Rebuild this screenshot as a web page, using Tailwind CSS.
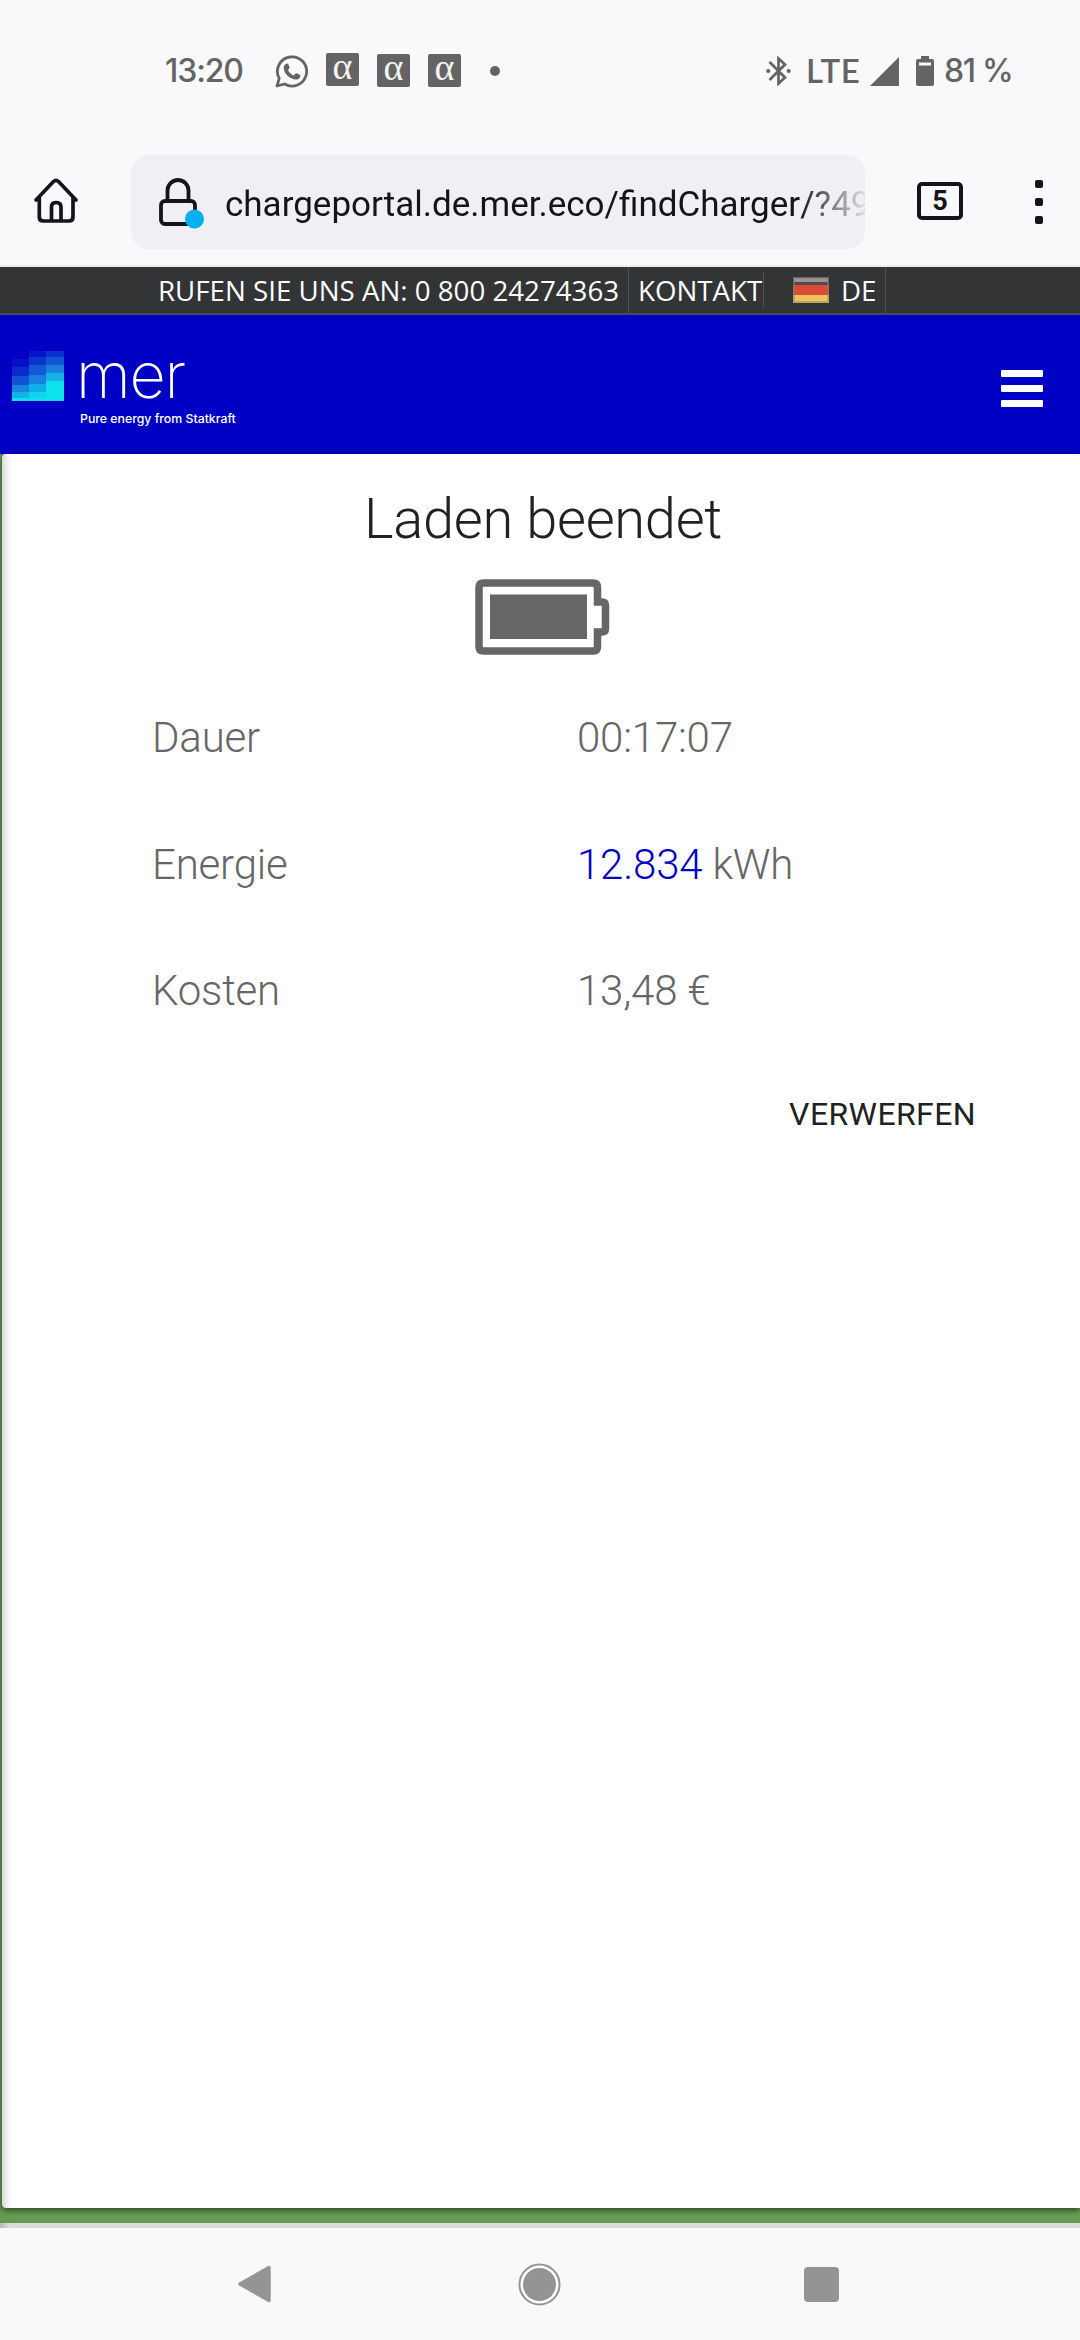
<!DOCTYPE html>
<html lang="de">
<head>
<meta charset="utf-8">
<title>Laden beendet</title>
<script src="https://cdn.jsdelivr.net/npm/@tailwindcss/browser@4"></script>
</head>
<body class="flex h-[2340px] w-[1080px] flex-col overflow-hidden bg-[#f9f9fb] font-[Roboto,sans-serif]">

<!-- Status bar -->
<header class="flex h-[142px] shrink-0 items-center pl-[165px] text-[#646464]">
  <span class="w-[110px] font-[Inter,sans-serif] text-[32px] leading-none font-medium tracking-[-1.100px]">13:20</span>
  <svg class="h-[33px] w-[33px]" viewBox="0 0 33 33"><path d="M2 31 4.2 23.4A14.6 14.6 0 1 1 9.6 29Z" fill="none" stroke="#646464" stroke-width="2.8" stroke-linejoin="round"/><path d="M11.2 8.8c.8-.4 1.800-.2 2.100.5l1.200 2.800c.2.600 0 1.100-.4 1.600l-1.200 1.400c1.300 2.500 3.200 4.200 5.900 5.400l1.500-1.800c.4-.5.9-.6 1.500-.4l2.900 1.400c.6.300.8.700.6 1.500-.5 2.200-2.400 3.500-4.600 3.400C14.600 24.200 9 18.300 8.700 13c-.1-1.700.9-3.400 2.500-4.200Z" fill="#646464"/></svg>
  <div class="ml-[18px] flex gap-[18px] font-[Liberation_Serif,serif] text-[38px] text-[#f4f4f4]">
    <span class="mb-px flex h-[33px] w-[33px] -translate-y-px items-center justify-center rounded-xs bg-[#646464] pb-[7px] leading-none">α</span>
    <span class="flex h-[33px] w-[33px] items-center justify-center rounded-xs bg-[#646464] pb-[7px] leading-none">α</span>
    <span class="flex h-[33px] w-[33px] items-center justify-center rounded-xs bg-[#646464] pb-[7px] leading-none">α</span>
  </div>
  <span class="ml-[29px] h-[10px] w-[10px] rounded-full bg-[#646464]"></span>
  <svg class="ml-[266px] h-[30px] w-[25px]" viewBox="0 0 25 30"><path d="M3.500 6 19 21.500 12.500 27.500V2.500L19 8.500 3.500 24" fill="none" stroke="#646464" stroke-width="2.700"/><circle cx="2.200" cy="15" r="2.100" fill="#646464"/><circle cx="22.700" cy="15" r="2.100" fill="#646464"/></svg>
  <span class="-mt-[2px] ml-[15px] w-[64px] font-[Lato,sans-serif] text-[33px] leading-none font-semibold tracking-[.5px]">LTE</span>
  <svg class="h-[29px] w-[29px]" viewBox="0 0 29 29"><path d="M0 29 29 0V29Z" fill="#646464"/></svg>
  <svg class="ml-[17px] h-[30px] w-[18px]" viewBox="0 0 18 30"><path d="M5 3V0h8v3h3q2 0 2 2v23q0 2-2 2H2q-2 0-2-2V5q0-2 2-2Z" fill="#646464"/><path d="M3 6.500h12v3H3z" fill="#f9f9fb"/></svg>
  <span class="ml-[10px] font-[Inter,sans-serif] text-[32px] leading-none font-medium tracking-[-1.300px] whitespace-nowrap">81 %</span>
</header>

<!-- Browser toolbar -->
<nav class="flex h-[125px] shrink-0 items-start border-b-2 border-[#ebecef] pt-[13px]">
  <svg class="mt-[21px] ml-[33px] h-[48px] w-[46px]" viewBox="0 0 46 48" fill="none" stroke="#15141a" stroke-width="3.700" stroke-linecap="round" stroke-linejoin="round"><path d="M3 24 20.500 5.500Q23 3.200 25.500 5.500L43 24M6.300 22V41q0 4 4 4H36q4 0 4-4V22M18.500 44V31q0-4.500 4.700-4.500T28 31V44"/></svg>
  <div class="ml-[52px] flex h-[94px] w-[734px] items-center overflow-hidden rounded-[18px] bg-[#f0f0f4]">
    <svg class="ml-[27px] h-[54px] w-[48px] shrink-0" viewBox="0 0 48 54" fill="none" stroke="#15141a" stroke-width="3.800"><rect x="3" y="26" width="34" height="23" rx="4"/><path d="M9.500 26V15.500a10.500 10.500 0 0 1 21 0V26"/><circle cx="36.500" cy="44" r="9.500" fill="#00b0f0" stroke="none"/></svg>
    <span class="mt-[5px] -mr-[60px] ml-[19px] bg-linear-to-r from-[#15141a] from-89% to-transparent to-100% bg-clip-text text-[35px] leading-[48px] whitespace-nowrap text-transparent">chargeportal.de.mer.eco/findCharger/?49</span>
  </div>
  <span class="mt-[27px] ml-[52px] flex h-[38px] w-[46px] items-center justify-center rounded-[5px] border-4 border-[#15141a] text-[27px] leading-none font-bold text-[#15141a]">5</span>
  <span class="mt-[25px] ml-[72px] flex flex-col gap-[10px]"><i class="size-[8px] rounded-[2px] bg-[#15141a]"></i><i class="size-[8px] rounded-[2px] bg-[#15141a]"></i><i class="size-[8px] rounded-[2px] bg-[#15141a]"></i></span>
</nav>

<!-- Contact bar -->
<section class="flex h-[48px] shrink-0 items-center border-b-2 border-[#4a4a48] bg-[#333436] font-[Open_Sans,sans-serif] text-[27.700px] leading-none text-white">
  <span class="flex h-full w-[629px] items-center border-r border-[#505050] pt-[2px] pl-[158px] whitespace-nowrap">RUFEN SIE UNS AN: 0 800 24274363</span>
  <span class="flex h-[36px] w-[135px] items-center border-r border-[#505050] pt-[2px] pl-[9px] whitespace-nowrap">KONTAKT</span>
  <span class="flex h-full w-[122px] items-center border-r border-[#505050] pl-[29px]">
    <svg class="h-[26px] w-[36px]" viewBox="0 0 36 26"><path d="M0 0h36v9H0z" fill="#514a4a"/><path d="M1 1h34v4H1z" fill="#989494"/><path d="M0 8h36v10H0z" fill="#dc4b38"/><path d="M0 18h36v8H0z" fill="#eec55b"/><path d="M1 1h34v24H1z" fill="none" stroke="#8a7f6a" stroke-opacity=".5" stroke-width="2"/></svg>
    <span class="ml-[12px] pt-[2px]">DE</span>
  </span>
</section>

<!-- Brand header -->
<section class="flex h-[139px] shrink-0 items-start bg-[#0000c4]">
  <svg class="mt-[35px] ml-[12px] h-[51px] w-[52px]" viewBox="0 0 52 51" shape-rendering="crispEdges">
    <path d="M0 9h17v8H0z" fill="#0412c6"/><path d="M0 17h17v9H0z" fill="#0a2cca"/><path d="M0 26h17v9H0z" fill="#1054d2"/><path d="M0 35h17v7H0z" fill="#1784de"/><path d="M0 42h17v6H0z" fill="#12b4e6"/><path d="M0 48h52v3H0z" fill="#10e2ec"/>
    <path d="M17 1h17v6H17z" fill="#0615c7"/><path d="M17 7h17v8H17z" fill="#0b35cd"/><path d="M17 15h17v10H17z" fill="#1458d4"/><path d="M17 25h17v9H17z" fill="#1a80de"/><path d="M17 34h17v8H17z" fill="#12aee8"/><path d="M17 42h17v6H17z" fill="#10d4ec"/>
    <path d="M34 1h18v6H34z" fill="#0b30cc"/><path d="M34 7h18v8H34z" fill="#1455d4"/><path d="M34 15h18v8H34z" fill="#1c80de"/><path d="M34 23h18v8H34z" fill="#14b4e8"/><path d="M34 31h18v17H34z" fill="#10e2ec"/>
  </svg>
  <div class="mt-[22px] ml-[16px] flex flex-col font-[Inter,sans-serif] text-white">
    <span class="-ml-[4px] h-[74px] text-[63px] leading-[76px] font-[250] tracking-[-1.300px]">mer</span>
    <span class="-mt-px text-[12.300px] leading-[18px] font-medium whitespace-nowrap">Pure energy from Statkraft</span>
  </div>
  <span class="mt-[55px] mr-[37px] ml-auto flex flex-col gap-[8px]"><i class="h-[7px] w-[42px] rounded-[1px] bg-white"></i><i class="h-[7px] w-[42px] rounded-[1px] bg-white"></i><i class="h-[7px] w-[42px] rounded-[1px] bg-white"></i></span>
</section>

<!-- Charging summary -->
<section class="flex h-[1769px] shrink-0 flex-col bg-[#669c52] pl-[2px]">
  <main class="flex h-[1754px] flex-col rounded-l-[4px] bg-white bg-linear-to-r from-[#dadada] to-white to-[9px] shadow-[0_2px_6px_rgba(0,0,0,.6)]">
    <h1 class="mt-[32px] pl-[4px] text-center text-[56px] leading-[66px] font-light tracking-[-.300px] text-[#212121]">Laden beendet</h1>
    <svg class="mt-[27px] ml-[473px] h-[76px] w-[135px]" viewBox="0 0 135 76"><path d="M8.500 4H118q4.500 0 4.500 4.500V23H127q3.500 0 3.500 3.500v23q0 3.500-3.500 3.500h-4.500v14.500q0 4.500-4.500 4.500H8.500Q4 72 4 67.500V8.500Q4 4 8.500 4Z" fill="none" stroke="#666" stroke-width="7.500"/><path d="M15 15.500h97V60H15z" fill="#666"/></svg>
    <dl class="mt-[20px] grid auto-rows-[126.500px] grid-cols-[425px_1fr] items-center pl-[150px] text-[42px] leading-none font-light tracking-[-.200px] text-[#666]">
      <dt>Dauer</dt><dd>00:17:07</dd>
      <dt>Energie</dt><dd><span class="text-[#0000c4]">12.834</span> kWh</dd>
      <dt>Kosten</dt><dd>13,48 €</dd>
    </dl>
    <button class="mt-[39px] mr-[104px] self-end text-[32px] leading-[40px] tracking-[.400px] text-[#212121]">VERWERFEN</button>
  </main>
</section>
<div class="h-[5px] shrink-0 bg-linear-to-r from-[#b9b9b9] to-[#dcdcdc] to-[10px]"></div>

<!-- System navigation -->
<footer class="flex h-[112px] shrink-0 items-center pl-[237px]">
  <svg class="h-[38px] w-[34px]" viewBox="0 0 34 38"><path d="M3 19 32 2.500v33Z" fill="#949494" stroke="#949494" stroke-width="3.500" stroke-linejoin="round"/></svg>
  <svg class="ml-[247px] h-[43px] w-[43px]" viewBox="0 0 43 43"><circle cx="21.500" cy="21.500" r="20" fill="#fff" stroke="#949494" stroke-width="2"/><circle cx="21.500" cy="21.500" r="16.500" fill="#949494"/></svg>
  <span class="ml-[243px] h-[35px] w-[35px] rounded-[4px] bg-[#949494]"></span>
</footer>
</body>
</html>
